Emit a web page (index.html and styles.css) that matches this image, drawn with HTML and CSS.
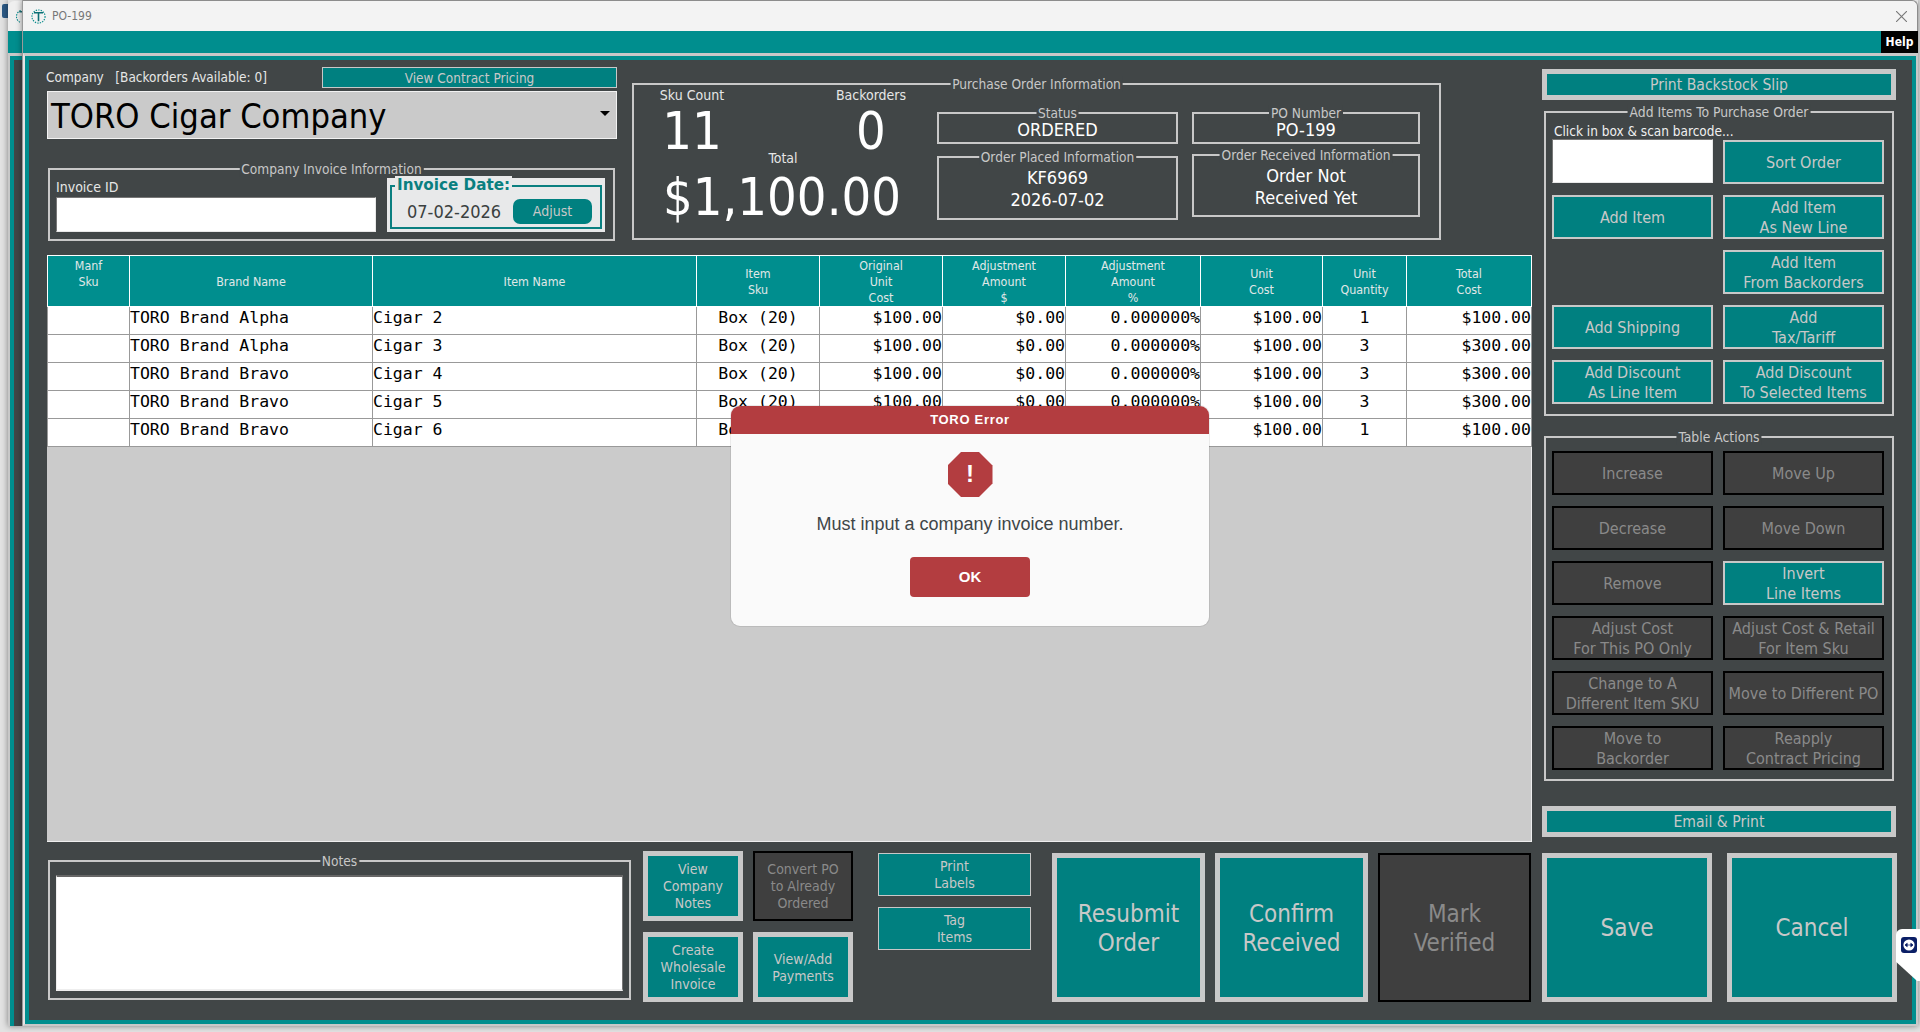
FILE: index.html
```html
<!DOCTYPE html>
<html lang="en">
<head>
  <meta charset="UTF-8">
  <meta name="viewport" content="width=device-width, initial-scale=1.0">
  <title>PO-199</title>
  <link rel="stylesheet" href="styles.css">
</head>
<body>
  <div class="desk">
    <div class="desk-icon"></div>
  </div>

  <div class="back-window">
    <div class="back-title">
      <svg class="back-icon" viewBox="0 0 16 16" width="15" height="15">
        <path d="M5 1.6A6.8 6.8 0 0 0 5 14.4" fill="none" stroke="#0a8c8c" stroke-width="1.2" stroke-dasharray="1.6 1.2"/>
        <path d="M3.5 3h5" fill="none" stroke="#1f6f75" stroke-width="1.5"/>
      </svg>
    </div>
    <div class="back-menu"></div>
    <div class="back-frame"></div>
  </div>

  <div class="window">
    <div class="title-bar">
      <svg class="app-icon" viewBox="0 0 16 16" width="15" height="15">
        <circle cx="8" cy="8" r="7" fill="none" stroke="#0a8c8c" stroke-width="1.2" stroke-dasharray="1.5 1.2"/>
        <path d="M3.2 4h9.6M8 4v9" fill="none" stroke="#0d6f75" stroke-width="1.7"/>
      </svg>
      <span class="title-text">PO-199</span>
      <svg class="close-icon" viewBox="0 0 10 10" width="11" height="11">
        <path d="M0 0L10 10M10 0L0 10" stroke="#777" stroke-width="1"/>
      </svg>
    </div>
    <div class="menu-bar"><span class="help">Help</span></div>

    <div class="frame">
      <div class="panel">
        <div class="main">
          <div class="top">
            <div class="company">
              <div class="company-row">
                <span class="label">Company&nbsp;&nbsp; [Backorders Available: 0]</span>
                <button class="btn contract">View Contract Pricing</button>
              </div>
              <div class="dropdown">
                <span>TORO Cigar Company</span>
                <span class="caret"></span>
              </div>
              <div class="group invoice-info">
                <span class="legend">Company Invoice Information</span>
                <div class="invoice-id">
                  <span class="label">Invoice ID</span>
                  <div class="input invoice-input"></div>
                </div>
                <div class="date-box">
                  <div class="date-inner">
                    <span class="date-legend">Invoice Date:</span>
                    <span class="date-value">07-02-2026</span>
                    <button class="adjust">Adjust</button>
                  </div>
                </div>
              </div>
            </div>

            <div class="group po-info">
              <span class="legend">Purchase Order Information</span>
              <div class="stats">
                <div class="counts">
                  <div class="count"><span class="label">Sku Count</span><span class="big">11</span></div>
                  <div class="count"><span class="label">Backorders</span><span class="big">0</span></div>
                </div>
                <span class="label total-label">Total</span>
                <span class="big total">$1,100.00</span>
              </div>
              <div class="po-col col-a">
                <div class="group info-box short">
                  <span class="legend">Status</span>
                  <span class="info-line">ORDERED</span>
                </div>
                <div class="group info-box tall">
                  <span class="legend">Order Placed Information</span>
                  <span class="info-line">KF6969</span>
                  <span class="info-line">2026-07-02</span>
                </div>
              </div>
              <div class="po-col col-b">
                <div class="group info-box short">
                  <span class="legend">PO Number</span>
                  <span class="info-line">PO-199</span>
                </div>
                <div class="group info-box tall">
                  <span class="legend">Order Received Information</span>
                  <span class="info-line">Order Not</span>
                  <span class="info-line">Received Yet</span>
                </div>
              </div>
            </div>
          </div>

          <div class="table-area">
            <table class="items">
              <colgroup>
                <col class="c-manf"><col class="c-brand"><col class="c-item">
                <col class="c-sku"><col class="c-sku"><col class="c-sku">
                <col class="c-pct"><col class="c-unit"><col class="c-qty"><col class="c-total">
              </colgroup>
              <thead>
                <tr>
                  <th>Manf<br>Sku<br>&nbsp;</th>
                  <th>Brand Name</th>
                  <th>Item Name</th>
                  <th>Item<br>Sku</th>
                  <th>Original<br>Unit<br>Cost</th>
                  <th>Adjustment<br>Amount<br>$</th>
                  <th>Adjustment<br>Amount<br>%</th>
                  <th>Unit<br>Cost</th>
                  <th>Unit<br>Quantity</th>
                  <th>Total<br>Cost</th>
                </tr>
              </thead>
              <tbody>
                <tr><td></td><td>TORO Brand Alpha</td><td>Cigar 2</td><td class="mid">Box (20)</td><td class="num">$100.00</td><td class="num">$0.00</td><td class="num">0.000000%</td><td class="num">$100.00</td><td class="mid">1</td><td class="num">$100.00</td></tr>
                <tr><td></td><td>TORO Brand Alpha</td><td>Cigar 3</td><td class="mid">Box (20)</td><td class="num">$100.00</td><td class="num">$0.00</td><td class="num">0.000000%</td><td class="num">$100.00</td><td class="mid">3</td><td class="num">$300.00</td></tr>
                <tr><td></td><td>TORO Brand Bravo</td><td>Cigar 4</td><td class="mid">Box (20)</td><td class="num">$100.00</td><td class="num">$0.00</td><td class="num">0.000000%</td><td class="num">$100.00</td><td class="mid">3</td><td class="num">$300.00</td></tr>
                <tr><td></td><td>TORO Brand Bravo</td><td>Cigar 5</td><td class="mid">Box (20)</td><td class="num">$100.00</td><td class="num">$0.00</td><td class="num">0.000000%</td><td class="num">$100.00</td><td class="mid">3</td><td class="num">$300.00</td></tr>
                <tr><td></td><td>TORO Brand Bravo</td><td>Cigar 6</td><td class="mid">Box (20)</td><td class="num">$100.00</td><td class="num">$0.00</td><td class="num">0.000000%</td><td class="num">$100.00</td><td class="mid">1</td><td class="num">$100.00</td></tr>
              </tbody>
            </table>
          </div>

          <div class="bottom">
            <div class="group notes">
              <span class="legend">Notes</span>
              <div class="input notes-input"></div>
            </div>
            <div class="small-grid">
              <button class="btn thick">View<br>Company<br>Notes</button>
              <button class="btn thick off">Convert PO<br>to Already<br>Ordered</button>
              <button class="btn thick">Create<br>Wholesale<br>Invoice</button>
              <button class="btn thick">View/Add<br>Payments</button>
            </div>
            <div class="label-col">
              <button class="btn thin">Print<br>Labels</button>
              <button class="btn thin">Tag<br>Items</button>
            </div>
            <div class="big-row">
              <button class="btn thick large">Resubmit<br>Order</button>
              <button class="btn thick large">Confirm<br>Received</button>
              <button class="btn thick large off">Mark<br>Verified</button>
            </div>
          </div>
        </div>

        <div class="side">
          <button class="btn wide">Print Backstock Slip</button>

          <div class="group side-group add-items">
            <span class="legend">Add Items To Purchase Order</span>
            <span class="scan-label">Click in box &amp; scan barcode...</span>
            <div class="side-grid">
              <div class="input scan-input"></div>
              <button class="btn act">Sort Order</button>
              <button class="btn act">Add Item</button>
              <button class="btn act">Add Item<br>As New Line</button>
              <span></span>
              <button class="btn act">Add Item<br>From Backorders</button>
              <button class="btn act">Add Shipping</button>
              <button class="btn act">Add<br>Tax/Tariff</button>
              <button class="btn act">Add Discount<br>As Line Item</button>
              <button class="btn act">Add Discount<br>To Selected Items</button>
            </div>
          </div>

          <div class="group side-group table-actions">
            <span class="legend">Table Actions</span>
            <div class="side-grid">
              <button class="btn act off">Increase</button>
              <button class="btn act off">Move Up</button>
              <button class="btn act off">Decrease</button>
              <button class="btn act off">Move Down</button>
              <button class="btn act off">Remove</button>
              <button class="btn act">Invert<br>Line Items</button>
              <button class="btn act off">Adjust Cost<br>For This PO Only</button>
              <button class="btn act off">Adjust Cost &amp; Retail<br>For Item Sku</button>
              <button class="btn act off">Change to A<br>Different Item SKU</button>
              <button class="btn act off">Move to Different PO</button>
              <button class="btn act off">Move to<br>Backorder</button>
              <button class="btn act off">Reapply<br>Contract Pricing</button>
            </div>
          </div>

          <button class="btn wide email">Email &amp; Print</button>

          <div class="finish">
            <button class="btn thick large save">Save</button>
            <button class="btn thick large save">Cancel</button>
          </div>
        </div>
      </div>
    </div>
  </div>

  <div class="modal">
    <div class="modal-head">TORO Error</div>
    <div class="modal-body">
      <div class="stop-sign">!</div>
      <p class="modal-text">Must input a company invoice number.</p>
      <button class="modal-ok">OK</button>
    </div>
  </div>

  <div class="tv-tab">
    <svg viewBox="0 0 16 16" width="16" height="16">
      <rect width="16" height="16" rx="3" fill="#0b1f66"/>
      <circle cx="8" cy="8" r="5.6" fill="#fff"/>
      <path d="M4 8h8M4 8l2.2-1.8v3.6zM12 8l-2.2-1.8v3.6z" fill="#0b1f66" stroke="#0b1f66" stroke-width=".7"/>
    </svg>
  </div>
</body>
</html>
```

FILE: styles.css
```css
* {
  box-sizing: border-box;
}
html, body {
  height: 100%;
}
body {
  margin: 0;
  display: flex;
  overflow: hidden;
  position: relative;
  background: #e2e2e2;
  font-family: "DejaVu Sans Condensed", "DejaVu Sans", sans-serif;
  font-stretch: condensed;
  font-size: 14px;
  color: #e6e6e6;
}
button {
  font: inherit;
  font-stretch: condensed;
  cursor: pointer;
  padding: 0;
}

.desk {
  width: 8px;
  flex: none;
  padding: 4px 0 0 2px;
}
.desk-icon {
  width: 6px;
  height: 14px;
  background: #2c5a86;
  border-radius: 2px 0 0 2px;
}
.back-window {
  width: 14px;
  flex: none;
  display: flex;
  flex-direction: column;
  height: 1026px;
  box-shadow: 0 0 6px rgba(0,0,0,0.45);
}
.back-title {
  height: 30px;
  margin-top: 1px;
  background: #efefef;
  border-top-left-radius: 6px;
  overflow: hidden;
  padding: 8px 0 0 8px;
}
.back-icon {
  display: block;
}
.back-menu {
  height: 25px;
  background: #008e8e;
  border-bottom: 3px solid #c8c8c8;
}
.back-frame {
  flex: 1;
  background: #414647;
  border-left: 2px solid #c8c8c8;
  box-shadow: inset 4px 4px 0 #008e8e;
}

.window {
  width: 1896px;
  flex: none;
  height: 1026px;
  border-left: 1px solid #9a9a9a;
  display: flex;
  flex-direction: column;
  box-shadow: 0 0 6px rgba(0,0,0,0.45);
}
.title-bar {
  height: 31px;
  background: #f3f3f3;
  border-top: 1px solid #8c8c8c;
  border-right: 1px solid #8c8c8c;
  border-top-right-radius: 6px;
  display: flex;
  align-items: center;
  padding: 0 10px 0 8px;
}
.title-text {
  margin-left: 6px;
  font-size: 12px;
  color: #777;
}
.close-icon {
  margin-left: auto;
}
.menu-bar {
  height: 22px;
  background: #008e8e;
  display: flex;
  justify-content: flex-end;
}
.help {
  width: 37px;
  background: #000;
  color: #fff;
  font-weight: bold;
  font-size: 12px;
  text-align: center;
  line-height: 23px;
}
.frame {
  flex: 1;
  border-top: 3px solid #c8c8c8;
  border-left: 2px solid #e4e4e4;
  border-right: 2px solid #c8c8c8;
  border-bottom: 2px solid #c8c8c8;
  background: #008e8e;
  padding: 4px;
  display: flex;
}
.panel {
  flex: 1;
  background: #414647;
  display: flex;
  gap: 10px;
  padding-left: 18px;
}

.main {
  width: 1485px;
  flex: none;
}
.top {
  height: 195px;
  display: flex;
  gap: 15px;
}
.company {
  width: 570px;
  flex: none;
  padding-top: 7px;
}
.company-row {
  height: 21px;
  display: flex;
  justify-content: space-between;
  align-items: center;
  margin-left: -1px;
}
.company-row .label {
  font-size: 13.5px;
  padding-bottom: 2px;
}
.label {
  font-size: 14px;
  line-height: 16px;
  color: #e6e6e6;
}
.btn {
  background: #008080;
  color: #c8c8c8;
  border: 2px solid #c8c8c8;
  text-align: center;
}
.btn.off {
  background: #3f3f3f;
  border-color: #000;
  color: #8a8a8a;
}
.contract {
  width: 295px;
  height: 21px;
  border-width: 1px;
  font-size: 13.5px;
}
.dropdown {
  height: 48px;
  margin-top: 3px;
  background: #cacaca;
  border: 1px solid #f2f2f2;
  color: #000;
  font-size: 34.2px;
  display: flex;
  align-items: center;
  justify-content: space-between;
  padding: 2px 6px 0 3px;
}
.caret {
  border-left: 5px solid transparent;
  border-right: 5px solid transparent;
  border-top: 5px solid #000;
  margin-bottom: 6px;
}

.group {
  border: 2px solid #c8c8c8;
  position: relative;
}
.legend {
  position: absolute;
  top: -9px;
  left: 50%;
  transform: translateX(-50%);
  background: #414647;
  padding: 0 2px;
  font-size: 13.6px;
  line-height: 16px;
  color: #c8c8c8;
  white-space: nowrap;
}
.invoice-info {
  width: 567px;
  height: 73px;
  margin: 29px 0 0 1px;
  display: flex;
  padding: 8px 8px 0 6px;
}
.invoice-id {
  width: 320px;
  flex: none;
  display: flex;
  flex-direction: column;
}
.invoice-id .label {
  line-height: 18px;
}
.input {
  background: #fff;
  border: 1px solid #e8e8e8;
  border-top-color: #777;
  border-left-color: #777;
}
.invoice-input {
  height: 35px;
  margin-top: 1px;
}
.date-box {
  width: 218px;
  height: 54px;
  margin-left: 11px;
  background: #e8e9ea;
  padding: 7px 3px 3px 3px;
}
.date-inner {
  height: 44px;
  border: 2px solid #0a7f80;
  position: relative;
  display: flex;
  align-items: center;
  padding: 8px 8px 0 15px;
  justify-content: space-between;
}
.date-legend {
  position: absolute;
  top: -11px;
  left: 3px;
  background: #e8e9ea;
  padding: 0 2px;
  font-family: "DejaVu Sans", sans-serif;
  font-stretch: normal;
  font-weight: bold;
  font-size: 15.2px;
  line-height: 18px;
  color: #0a7f80;
}
.date-value {
  font-size: 18px;
  color: #3a4040;
}
.adjust {
  width: 79px;
  height: 25px;
  border: none;
  border-radius: 7px;
  background: #008080;
  color: #c8c8c8;
  font-size: 14px;
}

.po-info {
  width: 809px;
  height: 157px;
  margin-top: 23px;
  display: flex;
}
.stats {
  width: 296px;
  flex: none;
  text-align: center;
  padding-top: 2px;
}
.counts {
  display: flex;
  justify-content: space-between;
  padding: 0 19px 0 18px;
}
.count {
  width: 80px;
  display: flex;
  flex-direction: column;
}
.big {
  font-size: 52px;
  line-height: 56px;
  color: #fff;
}
.total-label {
  display: block;
  margin-top: -9px;
  margin-left: 2px;
}
.total {
  display: block;
  margin-top: 3px;
}
.po-col {
  display: flex;
  flex-direction: column;
  padding-top: 27px;
}
.col-a {
  width: 241px;
  margin-left: 7px;
  gap: 12px;
}
.col-b {
  width: 228px;
  margin-left: 14px;
  gap: 10px;
}
.info-box {
  display: flex;
  flex-direction: column;
  align-items: center;
  justify-content: center;
}
.short {
  height: 32px;
  padding-top: 4px;
}
.tall {
  height: 64px;
  padding-top: 1px;
}
.col-b .tall {
  height: 63px;
  padding-top: 3px;
}
.info-line {
  font-size: 18px;
  line-height: 22px;
  color: #fff;
}

.table-area {
  height: 587px;
  background: #cbcbcb;
  border-right: 1px solid #eee;
  border-bottom: 1px solid #eee;
}
.items {
  width: 1484px;
  border-collapse: collapse;
  table-layout: fixed;
}
.c-manf { width: 82px; }
.c-brand { width: 243px; }
.c-item { width: 324px; }
.c-sku { width: 123px; }
.c-pct { width: 135px; }
.c-unit { width: 122px; }
.c-qty { width: 84px; }
.c-total { width: 125px; }
.items th {
  height: 51px;
  background: #008e8e;
  border: 1px solid #fff;
  font-weight: normal;
  font-size: 12.4px;
  line-height: 16px;
  color: #e0e8e8;
  padding: 1px 0 0 0;
}
.items td {
  height: 28px;
  background: #fff;
  border: 1px solid #999;
  font-family: "DejaVu Sans Mono", monospace;
  font-stretch: normal;
  font-size: 16.5px;
  color: #000;
  padding: 0 0 6px 0;
  white-space: nowrap;
  overflow: hidden;
}
.items td.num {
  text-align: right;
}
.items td.mid {
  text-align: center;
}

.bottom {
  display: flex;
}
.notes {
  width: 583px;
  height: 140px;
  margin: 18px 0 0 1px;
  padding: 13px 6px 7px 6px;
  flex: none;
}
.notes-input {
  height: 100%;
  border-top: 2px solid #666;
  border-right: 1px solid #777;
  border-bottom: 2px solid #eee;
  border-left: 1px solid #eee;
}
.thick {
  border-width: 5px;
}
.btn.thick.off {
  border-width: 2px;
}
.small-grid {
  width: 210px;
  flex: none;
  margin: 9px 0 0 12px;
  display: grid;
  grid-template-columns: 100px 100px;
  grid-auto-rows: 70px;
  gap: 11px 10px;
  font-size: 14px;
}
.small-grid .btn {
  line-height: 17px;
  padding-top: 1px;
}
.label-col {
  width: 153px;
  flex: none;
  margin: 11px 0 0 25px;
  display: flex;
  flex-direction: column;
  gap: 11px;
}
.thin {
  height: 43px;
  border-width: 1px;
  line-height: 17px;
}
.big-row {
  margin: 11px 0 0 21px;
  display: flex;
  gap: 10px;
}
.large {
  width: 153px;
  height: 149px;
  font-size: 24px;
  line-height: 29px;
  padding-top: 2px;
}

.side {
  width: 355px;
  flex: none;
  padding-top: 9px;
  display: flex;
  flex-direction: column;
}
.wide {
  width: 354px;
  height: 31px;
  border-width: 5px;
  font-size: 15.6px;
}
.side-group {
  width: 350px;
  margin-left: 2px;
  padding: 0 6px;
  font-size: 16px;
}
.side-group .legend {
  font-size: 13.8px;
}
.add-items {
  height: 305px;
  margin-top: 11px;
}
.scan-label {
  display: block;
  padding: 10px 0 0 2px;
  margin-bottom: 1px;
  font-size: 13.5px;
  line-height: 16px;
  color: #f0f0f0;
}
.table-actions {
  height: 345px;
  margin-top: 20px;
  padding-top: 13px;
}
.side-grid {
  display: grid;
  grid-template-columns: 161px 161px;
  grid-auto-rows: 44px;
  gap: 11px 10px;
}
.act {
  border-width: 2px;
  line-height: 20px;
  padding-top: 1px;
}
.scan-input {
  height: 44px;
  margin-top: -1px;
}
.email {
  margin-top: 25px;
}
.finish {
  display: flex;
  gap: 15px;
  margin-top: 16px;
}
.save {
  width: 170px;
}

.modal {
  position: absolute;
  left: 731px;
  top: 406px;
  width: 478px;
  height: 220px;
  background: #fafafa;
  border-radius: 9px;
  overflow: hidden;
  box-shadow: 0 0 0 1px rgba(0,0,0,0.08);
  font-family: "Liberation Sans", sans-serif;
  font-stretch: normal;
}
.modal-head {
  height: 28px;
  background: #b33d40;
  color: #fff;
  font-weight: bold;
  font-size: 13px;
  letter-spacing: 0.7px;
  line-height: 28px;
  text-align: center;
}
.modal-body {
  display: flex;
  flex-direction: column;
  align-items: center;
  padding-top: 18px;
}
.stop-sign {
  width: 45px;
  height: 45px;
  background: #b33d40;
  clip-path: polygon(30% 0, 70% 0, 100% 30%, 100% 70%, 70% 100%, 30% 100%, 0 70%, 0 30%);
  color: #fff;
  font-size: 24px;
  font-weight: bold;
  line-height: 43px;
  text-align: center;
}
.modal-text {
  margin: 18px 0 0 0;
  font-size: 18px;
  line-height: 18px;
  color: #3f4648;
}
.modal-ok {
  width: 120px;
  height: 40px;
  margin-top: 24px;
  padding-bottom: 2px;
  border: none;
  border-radius: 4px;
  background: #b33d40;
  color: #fff;
  font-family: "Liberation Sans", sans-serif;
  font-stretch: normal;
  font-weight: bold;
  font-size: 15px;
}

.tv-tab {
  position: absolute;
  left: 1896px;
  top: 929px;
  width: 24px;
  height: 52px;
  background: #fff;
  border-radius: 6px 0 0 0;
  clip-path: polygon(0 0, 100% 0, 100% 100%, 88% 100%, 0 63%);
  padding: 8px 0 0 5px;
}
```
